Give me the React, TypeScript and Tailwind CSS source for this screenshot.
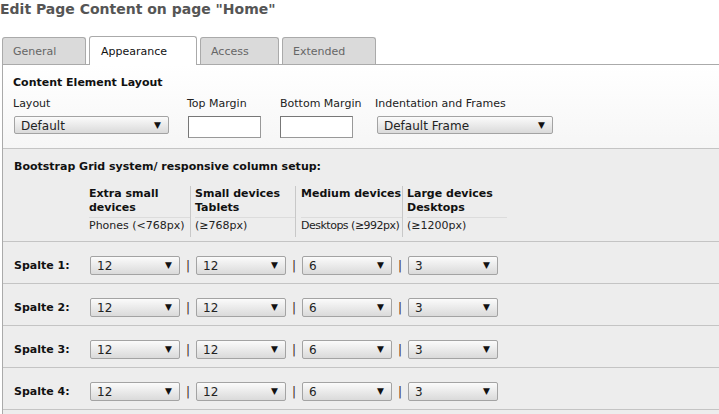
import React from 'react'

const Dropdown = ({ value, className }: { value: string; className: string }) => {
    return (
        <div className={`flex items-center justify-between rounded-[2px] border border-[#a3a3a3] bg-gradient-to-b from-[#fbfbfb] to-[#dadada] pl-[6px] pr-[7px] text-[12px] leading-none text-[#222] ${className}`}>
            <span className="pt-[1px]">{value}</span>
            <span className="text-[9px] text-[#111]">▼</span>
        </div>
    )
}

const columns = [
    { title: ['Extra small', 'devices'], sub: 'Phones (<768px)', w: 'w-[102px]', pl: 'pl-0', border: true, track: '' },
    { title: ['Small devices', 'Tablets'], sub: '(≥768px)', w: 'w-[105px]', pl: 'pl-[4px]', border: true, track: '' },
    { title: ['Medium devices'], sub: 'Desktops (≥992px)', w: 'w-[107px]', pl: 'pl-[5px]', border: true, track: 'tracking-[-0.5px]' },
    { title: ['Large devices', 'Desktops'], sub: '(≥1200px)', w: 'w-[104px]', pl: 'pl-[4px]', border: false, track: '' },
]

const rows = ['Spalte 1:', 'Spalte 2:', 'Spalte 3:', 'Spalte 4:']

const Sep = () => <span className="w-[16px] text-center text-[12px] leading-none text-[#3a1c1c]">|</span>

export default function App() {
    return (
        <div className="h-[414px] w-[719px] overflow-hidden bg-white font-['DejaVu_Sans',sans-serif] text-[11px] text-[#222]">
            <h1 className="pt-[1px] text-[14px] font-bold leading-[16px] text-[#555]">Edit Page Content on page "Home"</h1>

            {/* tabs */}
            <div className="ml-[2px] mt-[19px] flex items-end gap-[3px]">
                <div className="flex h-[27px] w-[84px] items-center rounded-t-[3px] border border-b-0 border-[#aaa] bg-[#dadada] pl-[10px] pt-[3px] text-[#666]">General</div>
                <div className="relative z-10 -mb-px flex h-[29px] w-[108px] items-center rounded-t-[3px] border border-b-0 border-[#aaa] bg-white pl-[11px] pt-[3px] text-[#111]">Appearance</div>
                <div className="flex h-[27px] w-[79px] items-center rounded-t-[3px] border border-b-0 border-[#aaa] bg-[#dadada] pl-[10px] pt-[3px] text-[#666]">Access</div>
                <div className="flex h-[27px] w-[94px] items-center rounded-t-[3px] border border-b-0 border-[#aaa] bg-[#dadada] pl-[10px] pt-[3px] text-[#666]">Extended</div>
            </div>

            <div className="ml-[2px] border-l border-t border-[#aaa]">
                {/* content element layout */}
                <div className="h-[83px] bg-gradient-to-b from-white to-[#f6f6f6] pl-[10px] pt-[11px]">
                    <div className="font-bold leading-[14px] text-[#111]">Content Element Layout</div>
                    <div className="mt-[7px] flex">
                        <div className="flex w-[174px] flex-col">
                            <span className="leading-[14px] text-[#222]">Layout</span>
                            <Dropdown value="Default" className="ml-[1px] mt-[5px] h-[18px] w-[155px]" />
                        </div>
                        <div className="flex w-[93px] flex-col">
                            <span className="leading-[14px] text-[#222]">Top Margin</span>
                            <div className="ml-[1px] mt-[5px] h-[22px] w-[73px] border border-[#999] border-l-[#777] border-t-[#777] bg-white" />
                        </div>
                        <div className="flex w-[95px] flex-col">
                            <span className="leading-[14px] text-[#222]">Bottom Margin</span>
                            <div className="mt-[5px] h-[22px] w-[73px] border border-[#999] border-l-[#777] border-t-[#777] bg-white" />
                        </div>
                        <div className="flex flex-col">
                            <span className="leading-[14px] text-[#222]">Indentation and Frames</span>
                            <Dropdown value="Default Frame" className="ml-[2px] mt-[5px] h-[18px] w-[176px]" />
                        </div>
                    </div>
                </div>

                {/* bootstrap grid */}
                <div className="border-t border-[#c4c4c4] bg-[#ededed]">
                    <div className="h-[92px] pl-[11px] pt-[11px]">
                        <div className="font-bold leading-[14px] text-[#111]">Bootstrap Grid system/ responsive column setup:</div>
                        <div className="ml-[75px] mt-[12px] flex">
                            {columns.map((c) => (
                                <div key={c.sub} className={`${c.w} ${c.pl} ${c.border ? 'border-r border-[#c8c8c8]' : ''} h-[51px] whitespace-nowrap`}>
                                    <div className="h-[32px] border-b border-[#dcdcdc] pt-[1px] font-bold leading-[14px] text-[#111]">
                                        {c.title.map((t) => (
                                            <div key={t}>{t}</div>
                                        ))}
                                    </div>
                                    <div className={`pt-[1px] leading-[14px] text-[#222] ${c.track}`}>{c.sub}</div>
                                </div>
                            ))}
                        </div>
                    </div>

                    {rows.map((r) => (
                        <div key={r} className="flex h-[42px] items-start border-t border-[#c4c4c4] pl-[11px] pt-[14px]">
                            <span className="flex h-[20px] w-[76px] items-center font-bold text-[#111]">{r}</span>
                            <Dropdown value="12" className="h-[19px] w-[90px]" />
                            <div className="flex h-[20px] items-center"><Sep /></div>
                            <Dropdown value="12" className="h-[19px] w-[90px]" />
                            <div className="flex h-[20px] items-center"><Sep /></div>
                            <Dropdown value="6" className="h-[19px] w-[90px]" />
                            <div className="flex h-[20px] items-center"><Sep /></div>
                            <Dropdown value="3" className="h-[19px] w-[90px]" />
                        </div>
                    ))}
                    <div className="h-[10px] border-t border-[#c4c4c4]" />
                </div>
            </div>
        </div>
    )
}
